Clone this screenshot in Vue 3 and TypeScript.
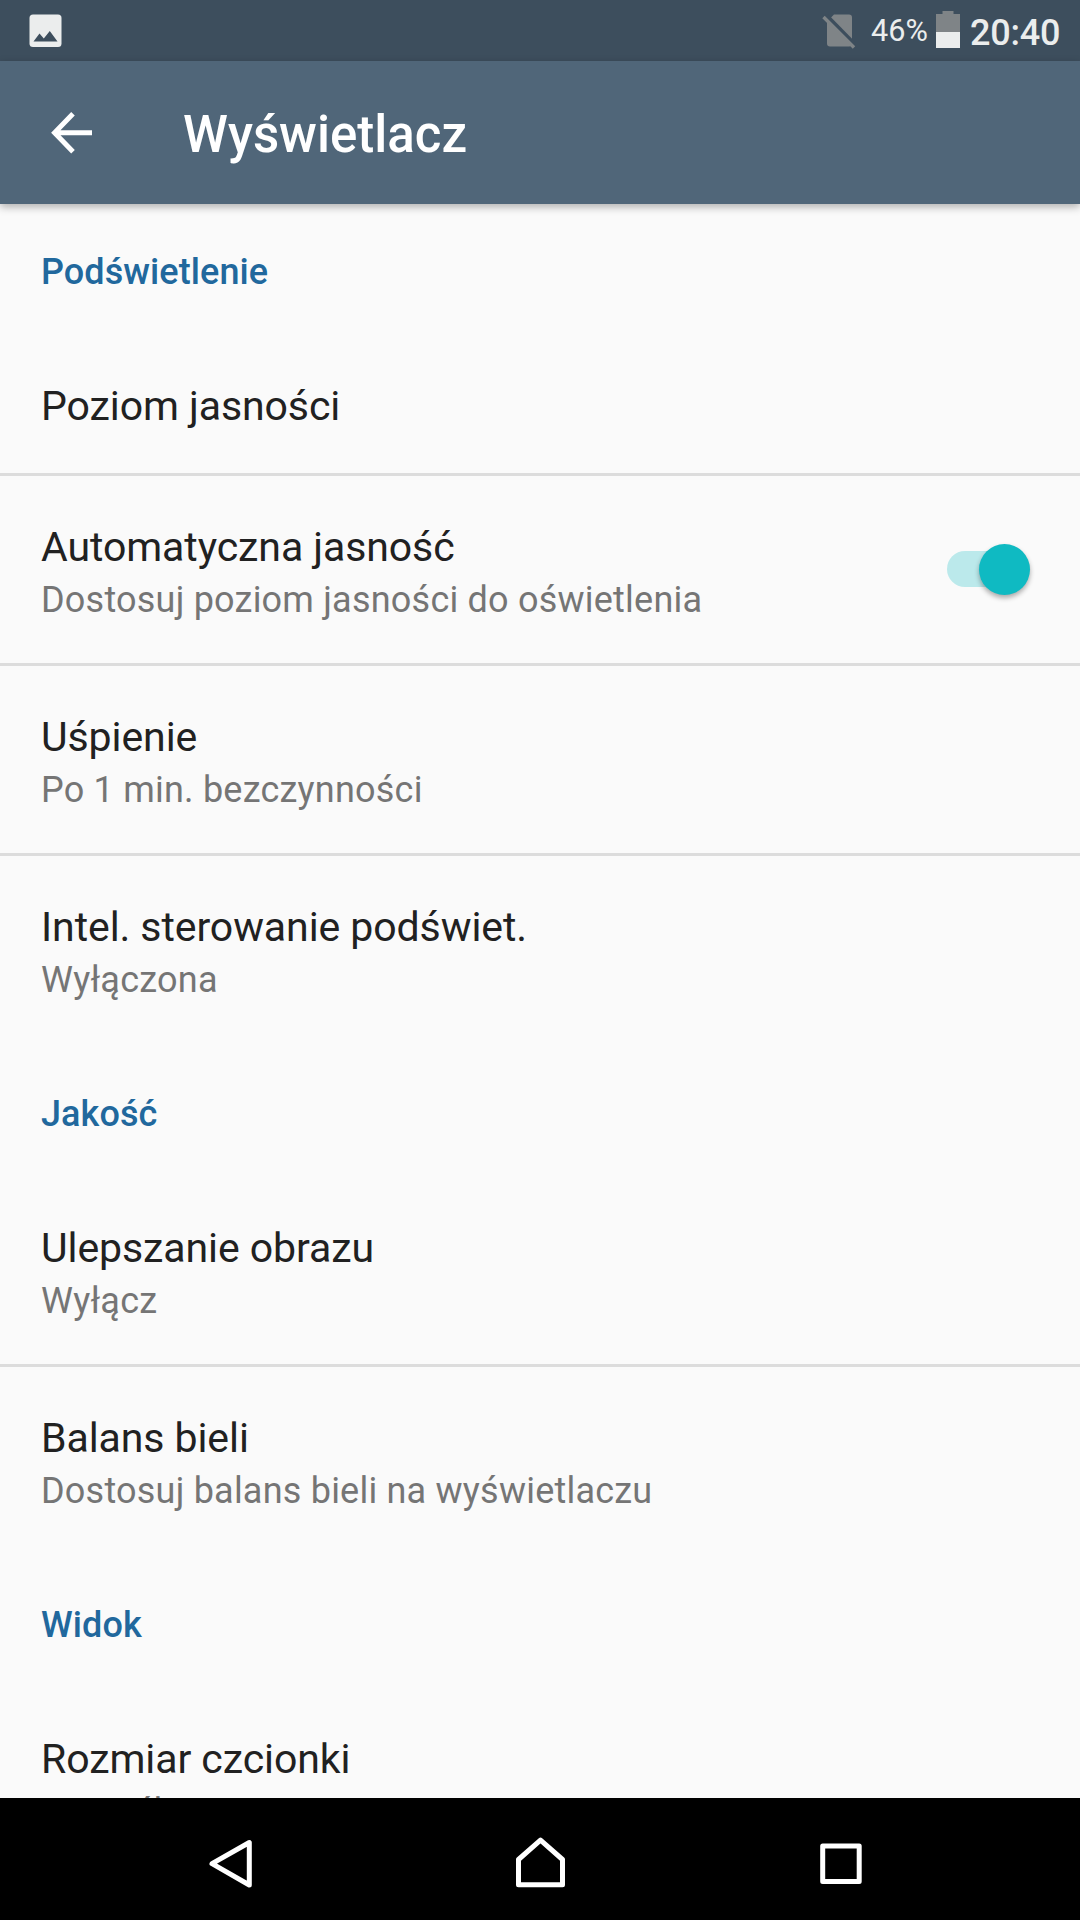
<script setup lang="ts">
interface Preference {
  title: string
  summary?: string
  toggle?: boolean
}

interface Section {
  heading: string
  items: Preference[]
}

const sections: Section[] = [
  {
    heading: 'Podświetlenie',
    items: [
      { title: 'Poziom jasności' },
      { title: 'Automatyczna jasność', summary: 'Dostosuj poziom jasności do oświetlenia', toggle: true },
      { title: 'Uśpienie', summary: 'Po 1 min. bezczynności' },
      { title: 'Intel. sterowanie podświet.', summary: 'Wyłączona' },
    ],
  },
  {
    heading: 'Jakość',
    items: [
      { title: 'Ulepszanie obrazu', summary: 'Wyłącz' },
      { title: 'Balans bieli', summary: 'Dostosuj balans bieli na wyświetlaczu' },
    ],
  },
  {
    heading: 'Widok',
    items: [{ title: 'Rozmiar czcionki', summary: 'Domyślny' }],
  },
]
</script>

<template>
  <div class="screen">
    <header class="status">
      <svg class="picture" width="34" height="34" viewBox="0 0 34 34">
        <rect x="0.5" y="0.5" width="32" height="32.5" rx="3.5" fill="#ebeded" />
        <path d="M4.5 27.5 L10.5 19.5 L14.8 24.5 L20.8 17 L28.5 27.5 Z" fill="#3d4e5d" />
      </svg>
      <div class="indicators">
        <svg class="sim" width="34" height="36" viewBox="0 0 34 36">
          <path d="M12 0.5 H27 a3 3 0 0 1 3 3 V29.5 a3 3 0 0 1 -3 3 H8 a3 3 0 0 1 -3 -3 V7.5 Z" fill="#7f8487" />
          <path d="M3.5 0.5 L33 30.5" stroke="#3d4e5d" stroke-width="4" />
          <path d="M1.5 3 L32 33.5" stroke="#7f8487" stroke-width="3.4" />
        </svg>
        <span class="percent">46%</span>
        <svg class="battery" width="24" height="37" viewBox="0 0 24 37">
          <path d="M0 3 H6.5 V0 H17.5 V3 H24 V21 H0 Z" fill="#7f8487" />
          <rect y="21" width="24" height="16" fill="#ebeded" />
        </svg>
        <span class="clock">20:40</span>
      </div>
    </header>

    <div class="appbar">
      <svg class="back" width="42" height="42" viewBox="0 0 42 42">
        <path d="M41 20.8 H4 M22 1.8 L3.6 20.8 L22 39.8" fill="none" stroke="#fff" stroke-width="5" />
      </svg>
      <h1>Wyświetlacz</h1>
    </div>

    <main class="list">
      <section v-for="section in sections" :key="section.heading">
        <h2>{{ section.heading }}</h2>
        <div
          v-for="(item, i) in section.items"
          :key="item.title"
          class="row"
          :class="{ single: !item.summary, last: i === section.items.length - 1 }"
        >
          <div class="texts">
            <div class="title">{{ item.title }}</div>
            <div v-if="item.summary" class="summary">{{ item.summary }}</div>
          </div>
          <div v-if="item.toggle" class="switch"><div class="thumb"></div></div>
        </div>
      </section>
    </main>

    <nav class="navbar">
      <svg width="60" height="60" viewBox="0 0 60 60">
        <path d="M49.3 12.5 V55 L12 33.7 Z" fill="none" stroke="#fff" stroke-width="5" stroke-linejoin="round" />
      </svg>
      <svg width="60" height="60" viewBox="0 0 60 60">
        <path d="M35.5 10.2 L57.5 29.5 V54.8 H13.5 V29.5 Z" fill="none" stroke="#fff" stroke-width="5" stroke-linejoin="round" />
      </svg>
      <svg width="60" height="60" viewBox="0 0 60 60">
        <rect x="12.7" y="15.9" width="36.5" height="35.6" fill="none" stroke="#fff" stroke-width="5" stroke-linejoin="round" />
      </svg>
    </nav>
  </div>
</template>

<style>
body {
  margin: 0;
}
</style>

<style scoped>
.screen {
  width: 1080px;
  height: 1920px;
  display: flex;
  flex-direction: column;
  overflow: hidden;
  background: #fafafa;
  font-family: Roboto, 'Noto Sans', sans-serif;
}
.status {
  flex: none;
  height: 61px;
  box-sizing: border-box;
  padding: 0 20px 0 29px;
  background: #3d4e5d;
  color: #ebeded;
  display: flex;
  justify-content: space-between;
  align-items: flex-start;
}
.picture {
  margin-top: 14px;
}
.indicators {
  display: flex;
  align-items: flex-start;
}
.sim {
  margin: 14px 15px 0 0;
}
.percent {
  width: 58px;
  margin-right: 7px;
  font-size: 30.6px;
  line-height: 36px;
  margin-top: 13px;
}
.battery {
  margin: 11px 10px 0 0;
}
.clock {
  width: 90px;
  font-size: 36px;
  font-weight: 500;
  line-height: 40px;
  letter-spacing: -0.25px;
  margin-top: 13px;
}
.appbar {
  flex: none;
  height: 143px;
  box-sizing: border-box;
  padding-left: 51px;
  display: flex;
  align-items: flex-start;
  background: #506679;
  color: #fff;
  box-shadow: 0 3px 8px rgba(0, 0, 0, 0.3);
  position: relative;
}
.back {
  margin: 51px 90px 0 0;
}
h1 {
  margin: 44px 0 0;
  font-size: 51px;
  font-weight: 500;
  line-height: 60px;
}
.list {
  flex: 1;
  min-height: 0;
  overflow: hidden;
}
h2 {
  margin: 0;
  height: 131px;
  box-sizing: border-box;
  padding: 42px 41px 0;
  font-size: 36px;
  font-weight: 500;
  line-height: 52px;
  letter-spacing: 0.08px;
  color: #21689d;
}
.row {
  height: 190px;
  box-sizing: border-box;
  padding: 44px 50px 0 41px;
  border-bottom: 3px solid #dcdcdc;
  display: flex;
  justify-content: space-between;
}
.row.single {
  height: 141px;
}
.row.last {
  border-bottom-color: transparent;
}
.title {
  font-size: 41px;
  line-height: 54px;
  letter-spacing: -0.08px;
  color: #212121;
}
.summary {
  font-size: 36px;
  line-height: 52px;
  letter-spacing: 0.22px;
  color: #757575;
}
.switch {
  width: 83px;
  height: 36px;
  margin-top: 31px;
  border-radius: 18px;
  background: linear-gradient(90deg, #bbe9eb 60px, transparent 60px);
  display: flex;
  justify-content: flex-end;
  align-items: center;
}
.thumb {
  width: 51px;
  height: 51px;
  border-radius: 50%;
  background: #0fbac2;
  box-shadow: 0 3px 5px rgba(0, 0, 0, 0.32);
}
.navbar {
  flex: none;
  height: 122px;
  box-sizing: border-box;
  padding: 32px 210px 0 200px;
  background: #000;
  display: flex;
  justify-content: space-between;
}
</style>
